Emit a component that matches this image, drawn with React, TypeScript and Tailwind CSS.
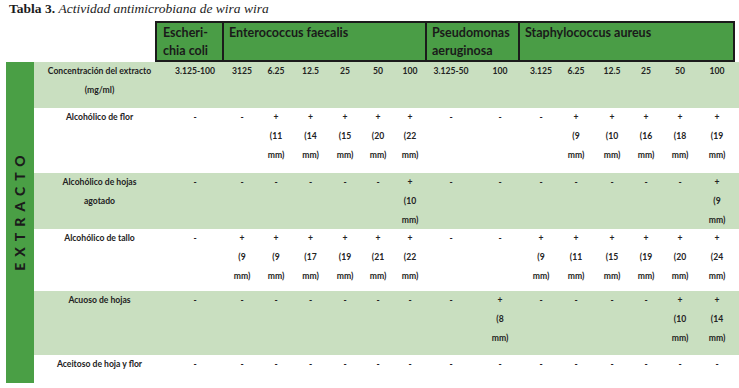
import React from 'react';

type Cell = string | [string, string];

const conc = ['3.125-100', '3125', '6.25', '12.5', '25', '50', '100', '3.125-50', '100', '3.125', '6.25', '12.5', '25', '50', '100'];

// widths of the 15 value columns, left to right
const colWidths = ['w-[60px]', 'w-[34px]', 'w-[34px]', 'w-[35px]', 'w-[34px]', 'w-[32px]', 'w-[32px]', 'w-[50px]', 'w-[48px]', 'w-[34px]', 'w-[36px]', 'w-[36px]', 'w-[32px]', 'w-[36px]', 'w-[38px]'];

const rows: { label: string[]; cells: Cell[]; shaded: boolean; h: string }[] = [
  {
    label: ['Alcohólico de flor'],
    cells: ['-', '-', ['11', 'mm'], ['14', 'mm'], ['15', 'mm'], ['20', 'mm'], ['22', 'mm'], '-', '-', '-', ['9', 'mm'], ['10', 'mm'], ['16', 'mm'], ['18', 'mm'], ['19', 'mm']],
    shaded: false,
    h: 'h-[65px]',
  },
  {
    label: ['Alcohólico de hojas', 'agotado'],
    cells: ['-', '-', '-', '-', '-', '-', ['10', 'mm'], '-', '-', '-', '-', '-', '-', '-', ['9', 'mm']],
    shaded: true,
    h: 'h-[56px]',
  },
  {
    label: ['Alcohólico de tallo'],
    cells: ['-', ['9', 'mm'], ['9', 'mm'], ['17', 'mm'], ['19', 'mm'], ['21', 'mm'], ['22', 'mm'], '-', '-', ['9', 'mm'], ['11', 'mm'], ['15', 'mm'], ['19', 'mm'], ['20', 'mm'], ['24', 'mm']],
    shaded: false,
    h: 'h-[62px]',
  },
  {
    label: ['Acuoso de hojas'],
    cells: ['-', '-', '-', '-', '-', '-', '-', '-', ['8', 'mm'], '-', '-', '-', '-', ['10', 'mm'], ['14', 'mm']],
    shaded: true,
    h: 'h-[64px]',
  },
  {
    label: ['Aceitoso de hoja y flor'],
    cells: ['-', '-', '-', '-', '-', '-', '-', '-', '-', '-', '-', '-', '-', '-', '-'],
    shaded: false,
    h: 'h-[40px]',
  },
];

function Value({ cell }: { cell: Cell }) {
  if (typeof cell === 'string') return <div>{cell}</div>;
  return (
    <>
      <div>+</div>
      <div>({cell[0]}</div>
      <div>{cell[1]})</div>
    </>
  );
}

function Row({ label, cells, shaded, h }: { label: string[]; cells: Cell[]; shaded: boolean; h: string }) {
  return (
    <div className={`flex ${h} ${shaded ? 'bg-[#c9dfc0]' : 'bg-white'}`}>
      <div className="w-[131px] shrink-0 text-center">
        {label.map((l) => (
          <div key={l}>{l}</div>
        ))}
      </div>
      {cells.map((c, i) => (
        <div key={i} className={`${colWidths[i]} shrink-0 text-center`}>
          <Value cell={c} />
        </div>
      ))}
    </div>
  );
}

export default function App() {
  return (
    <div className="w-[739px] h-[388px] overflow-hidden bg-white text-[#1c1c1c]">
      <div className="h-[21px] pt-[1px] pl-[9px] leading-[16px] text-[13.5px] font-['Liberation_Serif',serif]">
        <b>Tabla 3.</b> <i>Actividad antimicrobiana de wira wira</i>
      </div>

      <div className="ml-[155px] w-[580px] h-[41px] flex border-2 border-[#1b1b1b] bg-[#4a9d46] font-['Lato',sans-serif] font-bold text-[12.5px] leading-[18px] text-[#1a1a1a]">
        <div className="w-[65px] pl-[6px] pt-[1px]">
          <div>Escheri-</div>
          <div>chia coli</div>
        </div>
        <div className="w-[203px] border-l-2 border-[#1b1b1b] pl-[5px] pt-[1px]">Enterococcus faecalis</div>
        <div className="w-[93px] border-l-2 border-[#1b1b1b] pl-[5px] pt-[1px]">
          <div>Pseudomonas</div>
          <div>aeruginosa</div>
        </div>
        <div className="flex-1 border-l-2 border-[#1b1b1b] pl-[5px] pt-[1px]">Staphylococcus aureus</div>
      </div>

      <div className="flex font-['Lato',sans-serif] font-bold text-[8.6px] leading-[19px] text-[#222]">
        <div className="ml-[6px] w-[28px] h-[321px] shrink-0 bg-[#4a9f45] flex items-center justify-center pb-[26px]">
          <div className="-rotate-90 whitespace-nowrap text-[14px] font-black tracking-[6px] text-[#1b1b1b] leading-none">
            EXTRACTO
          </div>
        </div>
        <div className="flex-1">
          <div className="flex h-[46px] bg-[#c9dfc0]">
            <div className="w-[131px] shrink-0 text-center">
              <div>Concentración del extracto</div>
              <div>(mg/ml)</div>
            </div>
            {conc.map((c, i) => (
              <div key={i} className={`${colWidths[i]} shrink-0 text-center`}>
                {c}
              </div>
            ))}
          </div>
          {rows.map((r, i) => (
            <Row key={i} {...r} />
          ))}
        </div>
      </div>
    </div>
  );
}
